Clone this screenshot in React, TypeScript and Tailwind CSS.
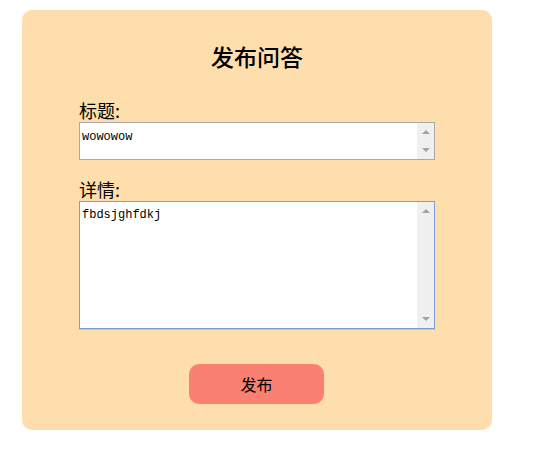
import { useState } from 'react';

function ScrollTrack() {
  // classic scrollbar look: grey track with two small arrows
  return (
    <div className="w-[17px] shrink-0 bg-[#f0f0f0] flex flex-col items-center justify-between py-[7px]">
      <div className="w-0 h-0 border-x-[4px] border-x-transparent border-b-[4px] border-b-[#a3a3a3]" />
      <div className="w-0 h-0 border-x-[4px] border-x-transparent border-t-[4px] border-t-[#a3a3a3]" />
    </div>
  );
}

export default function App() {
  const [title, setTitle] = useState('wowowow');
  const [detail, setDetail] = useState('fbdsjghfdkj');

  return (
    <div className="min-h-screen bg-white pt-[10px] pl-[22px]">
      {/* Card */}
      <div className="w-[470px] h-[420px] rounded-[10px] bg-[#FFDEAD] pt-[32px] flex flex-col items-center font-['Noto_Sans_CJK_SC',sans-serif]">
        <h2 className="text-[23px] leading-[29px] font-medium text-black">发布问答</h2>

        <form className="w-[356px] mt-[29px]" onSubmit={(e) => e.preventDefault()}>
          <label className="block text-[18px] leading-[20px] mb-[2px] text-black">标题:</label>
          <div className="flex h-[38px] bg-white border border-[#a9a9a9]">
            <textarea
              value={title}
              onChange={(e) => setTitle(e.target.value)}
              className="flex-1 resize-none overflow-hidden bg-white pl-[2px] pt-[7px] text-[12px] leading-[14px] text-black font-['Liberation_Mono',monospace] outline-none"
            />
            <ScrollTrack />
          </div>

          <label className="block mt-[19px] text-[18px] leading-[20px] mb-[2px] text-black">详情:</label>
          <div className="flex h-[128px] bg-white border border-[#7b9ed9] shadow-[0_1px_0_#b5c7e8]">
            <textarea
              value={detail}
              onChange={(e) => setDetail(e.target.value)}
              className="flex-1 resize-none overflow-hidden bg-white pl-[2px] pt-[6px] text-[12px] leading-[14px] text-black font-['Liberation_Mono',monospace] outline-none"
            />
            <ScrollTrack />
          </div>

          <button
            type="submit"
            className="block ml-[110px] mt-[35px] w-[135px] h-[40px] rounded-[10px] bg-[#FA8072] text-[16px] text-black"
          >
            发布
          </button>
        </form>
      </div>
    </div>
  );
}
